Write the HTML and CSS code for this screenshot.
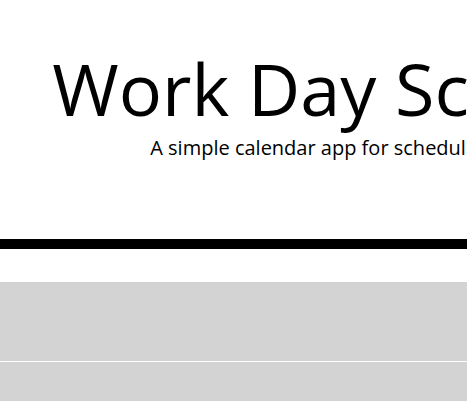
FILE: index.html
```html
<!DOCTYPE html>
<html lang="en">
<head>
<meta charset="utf-8">
<title>Work Day Scheduler</title>
<link rel="stylesheet" href="styles.css">
</head>
<body>
<div class="page">
  <header class="jumbotron">
    <h1 class="display-3">Work Day Scheduler</h1>
    <p class="lead">A simple calendar app for scheduling your work day</p>
  </header>
  <main class="container">
    <div class="time-block"></div>
    <div class="time-block"></div>
  </main>
</div>
</body>
</html>
```

FILE: styles.css
```css
html, body {
  margin: 0;
  padding: 0;
  overflow: hidden;
}
body {
  font-family: "Open Sans", "Liberation Sans", sans-serif;
  color: #000;
  background: #fff;
}
.page {
  width: 782px;
}
.jumbotron {
  text-align: center;
  padding: 45px 0 76px;
  border-bottom: 10px solid #000;
}
.display-3 {
  font-size: 72px;
  font-weight: 400;
  line-height: 1.2;
  margin: 0 0 2px;
}
.lead {
  font-size: 20px;
  line-height: 1.5;
  margin: 0;
}
.container {
  margin-top: 33px;
}
.time-block {
  height: 79px;
  background: #d3d3d3;
  border-bottom: 1px solid #fff;
}
```
